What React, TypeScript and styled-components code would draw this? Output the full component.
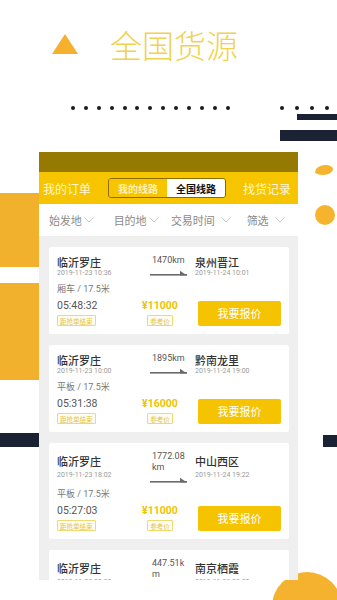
import * as React from 'react';
import styled, { createGlobalStyle } from 'styled-components';

const GlobalStyle = createGlobalStyle`
  html, body {
    margin: 0;
    padding: 0;
    background: #ffffff;
  }
  body {
    font-family: Roboto, "Noto Sans CJK SC", sans-serif;
  }
`;

const Page = styled.div`
  position: relative;
  width: 337px;
  height: 600px;
  overflow: hidden;
  background: #ffffff;
`;

const TitleRow = styled.div`
  position: relative;
  z-index: 1;
  display: flex;
  align-items: center;
  gap: 32px;
  height: 32px;
  padding: 28px 0 0 52px;
`;

const Triangle = styled.div`
  width: 0;
  height: 0;
  border-left: 13px solid transparent;
  border-right: 13px solid transparent;
  border-bottom: 20px solid #f5b02e;
`;

const Title = styled.h1`
  margin: 0;
  font-family: "Noto Sans CJK SC", sans-serif;
  font-size: 32px;
  line-height: 32px;
  font-weight: 300;
  color: #f2d24c;
`;

// decorative shapes scattered on the page background
const Shape = styled.div<{ $x: number; $y: number; $w: number; $h: number; $c: string; $r?: string }>`
  position: absolute;
  left: ${({ $x }) => $x}px;
  top: ${({ $y }) => $y}px;
  width: ${({ $w }) => $w}px;
  height: ${({ $h }) => $h}px;
  background: ${({ $c }) => $c};
  border-radius: ${({ $r }) => $r || '0'};
`;

const Dots = styled.div<{ $x: number; $gap: number }>`
  position: absolute;
  left: ${({ $x }) => $x}px;
  top: 106px;
  display: flex;
  gap: ${({ $gap }) => $gap}px;
`;

const Dot = styled.span`
  width: 4px;
  height: 4px;
  border-radius: 50%;
  background: #1a1a1a;
`;

const Phone = styled.div`
  position: relative;
  z-index: 1;
  width: 259px;
  height: 428px;
  margin: 92px 0 0 39px;
  overflow: hidden;
  background: #efefef;
  display: flex;
  flex-direction: column;
`;

const StatusBar = styled.div`
  height: 20px;
  flex-shrink: 0;
  background: #957900;
`;

const NavBar = styled.div`
  height: 32px;
  flex-shrink: 0;
  display: flex;
  align-items: center;
  justify-content: space-between;
  padding: 0 7px 0 4px;
  background: #f6c500;
`;

const NavText = styled.span`
  font-family: "Noto Sans CJK SC", sans-serif;
  font-size: 12px;
  color: #fff6d8;
`;

const Toggle = styled.div`
  display: flex;
  height: 20px;
  border: 1px solid #8a6b00;
  border-radius: 3px;
  overflow: hidden;
  box-sizing: border-box;
`;

const ToggleItem = styled.span<{ $active?: boolean }>`
  width: 58px;
  display: flex;
  align-items: center;
  justify-content: center;
  font-family: "Noto Sans CJK SC", sans-serif;
  font-size: 10px;
  font-weight: 700;
  background: ${({ $active }) => ($active ? '#ffffff' : '#f6c500')};
  color: ${({ $active }) => ($active ? '#111111' : '#fdf0b8')};
`;

const FilterBar = styled.div`
  height: 32px;
  flex-shrink: 0;
  display: flex;
  background: #ffffff;
`;

const FilterItem = styled.div<{ $gap: number }>`
  flex: 1;
  display: flex;
  align-items: center;
  justify-content: center;
  gap: ${({ $gap }) => $gap}px;
  font-family: "Noto Sans CJK SC", sans-serif;
  font-size: 11px;
  color: #8a8a8a;
`;

const List = styled.div`
  display: flex;
  flex-direction: column;
  gap: 11px;
  padding: 11px 9px 0 10px;
`;

const Card = styled.div`
  flex-shrink: 0;
  background: #ffffff;
  border-radius: 2px;
  padding: 8px 8px 8px 8px;
`;

const TopRow = styled.div`
  display: flex;
  align-items: stretch;
`;

const Place = styled.div<{ $w?: number }>`
  display: flex;
  flex-direction: column;
  justify-content: space-evenly;
  width: ${({ $w }) => ($w ? `${$w}px` : 'auto')};
  flex: ${({ $w }) => ($w ? 'none' : '1')};
`;

const City = styled.div`
  font-family: "Noto Sans CJK SC", sans-serif;
  font-size: 11px;
  line-height: 14px;
  font-weight: 500;
  color: #333333;
`;

const Time = styled.div`
  font-family: Roboto, sans-serif;
  font-size: 7px;
  line-height: 9px;
  color: #9a9a9a;
`;

const Route = styled.div`
  width: 37px;
  margin-right: 8px;
  display: flex;
  flex-direction: column;
`;

const Distance = styled.div`
  font-family: Roboto, sans-serif;
  font-size: 9px;
  line-height: 11px;
  color: #555555;
  word-break: break-all;
  padding-left: 2px;
`;

const Arrow = styled.svg`
  display: block;
  margin-top: 4px;
`;

const Vehicle = styled.div`
  margin-top: 5px;
  font-family: Roboto, "Noto Sans CJK SC", sans-serif;
  font-size: 9px;
  line-height: 12px;
  color: #777777;
`;

const BottomRow = styled.div`
  margin-top: 5px;
  display: flex;
  align-items: center;
`;

const Countdown = styled.div`
  width: 85px;
  display: flex;
  flex-direction: column;
  align-items: flex-start;
  gap: 3px;
`;

const Clock = styled.div`
  font-family: Roboto, sans-serif;
  font-size: 10.5px;
  line-height: 12px;
  color: #555555;
`;

const Badge = styled.span`
  display: inline-flex;
  align-items: center;
  height: 9px;
  padding: 0 2px;
  border: 1px solid #f0d872;
  border-radius: 1px;
  font-family: "Noto Sans CJK SC", sans-serif;
  font-size: 6.5px;
  color: #e4c242;
  background: #fffdf2;
`;

const Price = styled.div`
  width: 36px;
  display: flex;
  flex-direction: column;
  align-items: center;
  gap: 3px;
`;

const Amount = styled.div`
  font-family: Roboto, sans-serif;
  font-size: 10.5px;
  line-height: 12px;
  font-weight: 700;
  color: #f0c200;
`;

const QuoteButton = styled.button`
  margin-left: auto;
  width: 83px;
  height: 25px;
  border: none;
  border-radius: 2px;
  background: #f6c300;
  color: #ffffff;
  font-family: "Noto Sans CJK SC", sans-serif;
  font-size: 11px;
  padding: 0;
`;

const Chevron = () => (
  <svg width="10" height="6" viewBox="0 0 10 6">
    <polyline points="0.5,0.5 5,5 9.5,0.5" fill="none" stroke="#c4c4c4" strokeWidth="0.9" />
  </svg>
);

const RouteArrow = () => (
  <Arrow width="37" height="6" viewBox="0 0 37 6">
    <rect x="0" y="4" width="37" height="1.6" fill="#6a6a6a" />
    <polygon points="37,5.6 30,0.8 30,5.6" fill="#6a6a6a" />
  </Arrow>
);

type Order = {
  from: string;
  fromTime: string;
  to: string;
  toTime: string;
  km: string;
  truck: string;
  left: string;
  price: string;
};

const orders: Order[] = [
  { from: '临沂罗庄', fromTime: '2019-11-23 10:36', to: '泉州晋江', toTime: '2019-11-24 10:01', km: '1470km', truck: '厢车 / 17.5米', left: '05:48:32', price: '¥11000' },
  { from: '临沂罗庄', fromTime: '2019-11-23 10:00', to: '黔南龙里', toTime: '2019-11-24 19:00', km: '1895km', truck: '平板 / 17.5米', left: '05:31:38', price: '¥16000' },
  { from: '临沂罗庄', fromTime: '2019-11-23 18:02', to: '中山西区', toTime: '2019-11-24 19:22', km: '1772.08km', truck: '平板 / 17.5米', left: '05:27:03', price: '¥11000' },
  { from: '临沂罗庄', fromTime: '2019-11-23 09:30', to: '南京栖霞', toTime: '2019-11-23 23:30', km: '447.51km', truck: '平板 / 17.5米', left: '05:20:11', price: '¥6000' },
];

const filters = [
  { label: '始发地', gap: 2 },
  { label: '目的地', gap: 2 },
  { label: '交易时间', gap: 6 },
  { label: '筛选', gap: 6 },
];

const OrderCard = ({ o }: { o: Order }) => (
  <Card>
    <TopRow>
      <Place $w={93}>
        <City>{o.from}</City>
        <Time>{o.fromTime}</Time>
      </Place>
      <Route>
        <Distance>{o.km}</Distance>
        <RouteArrow />
      </Route>
      <Place>
        <City>{o.to}</City>
        <Time>{o.toTime}</Time>
      </Place>
    </TopRow>
    <Vehicle>{o.truck}</Vehicle>
    <BottomRow>
      <Countdown>
        <Clock>{o.left}</Clock>
        <Badge>距抢单结束</Badge>
      </Countdown>
      <Price>
        <Amount>{o.price}</Amount>
        <Badge>参考价</Badge>
      </Price>
      <QuoteButton>我要报价</QuoteButton>
    </BottomRow>
  </Card>
);

export default function App() {
  return (
    <Page>
      <GlobalStyle />

      <Dots $x={71} $gap={8.9}>
        {Array.from({ length: 13 }).map((_, i) => (
          <Dot key={i} />
        ))}
      </Dots>
      <Dots $x={280} $gap={11}>
        {Array.from({ length: 4 }).map((_, i) => (
          <Dot key={i} />
        ))}
      </Dots>
      <Shape $x={297} $y={114} $w={40} $h={6} $c="#1b2233" />
      <Shape $x={280} $y={130} $w={57} $h={11} $c="#1b2233" />
      <Shape $x={0} $y={193} $w={39} $h={74} $c="#f2b12d" />
      <Shape $x={0} $y={283} $w={39} $h={97} $c="#f2b12d" />
      <Shape $x={0} $y={433} $w={39} $h={14} $c="#1b2233" />
      <Shape $x={315} $y={165} $w={18} $h={10} $c="#f6b42e" $r="60% 40% 55% 45% / 70% 40% 60% 30%" />
      <Shape $x={315} $y={205} $w={20} $h={20} $c="#f6b42e" $r="50%" />
      <Shape $x={323} $y={435} $w={14} $h={12} $c="#1b2233" />
      <Shape $x={272} $y={572} $w={70} $h={70} $c="#f5b22e" $r="50%" />

      <TitleRow>
        <Triangle />
        <Title>全国货源</Title>
      </TitleRow>

      <Phone>
        <StatusBar />
        <NavBar>
          <NavText>我的订单</NavText>
          <Toggle>
            <ToggleItem>我的线路</ToggleItem>
            <ToggleItem $active>全国线路</ToggleItem>
          </Toggle>
          <NavText>找货记录</NavText>
        </NavBar>
        <FilterBar>
          {filters.map((f) => (
            <FilterItem key={f.label} $gap={f.gap}>
              {f.label}
              <Chevron />
            </FilterItem>
          ))}
        </FilterBar>
        <List>
          {orders.map((o, i) => (
            <OrderCard key={i} o={o} />
          ))}
        </List>
      </Phone>
    </Page>
  );
}
